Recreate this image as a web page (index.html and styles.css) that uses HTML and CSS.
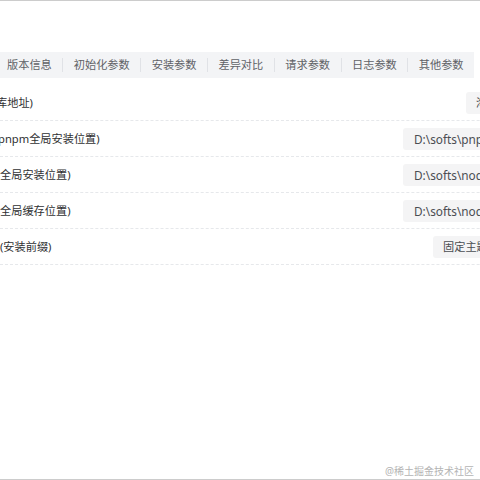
FILE: index.html
```html
<!DOCTYPE html>
<html lang="zh-CN">
<head>
<meta charset="utf-8">
<link rel="stylesheet" href="styles.css">
</head>
<body>
<div class="frame">
  <nav class="tabs">
    <span class="tab">版本信息</span><span class="sep"></span>
    <span class="tab">初始化参数</span><span class="sep"></span>
    <span class="tab">安装参数</span><span class="sep"></span>
    <span class="tab">差异对比</span><span class="sep"></span>
    <span class="tab">请求参数</span><span class="sep"></span>
    <span class="tab">日志参数</span><span class="sep"></span>
    <span class="tab">其他参数</span>
  </nav>
  <div class="rows">
    <div class="row first">
      <span class="label cut4">库地址)</span>
      <span class="val w1">淘宝镜像源</span>
    </div>
    <div class="row">
      <span class="label cut2">pnpm全局安装位置)</span>
      <span class="val w2">D:\softs\pnpm\global</span>
    </div>
    <div class="row">
      <span class="label">全局安装位置)</span>
      <span class="val w2">D:\softs\nodejs\node_global</span>
    </div>
    <div class="row">
      <span class="label">全局缓存位置)</span>
      <span class="val w2">D:\softs\nodejs\node_cache</span>
    </div>
    <div class="row">
      <span class="label">(安装前缀)</span>
      <span class="val w3">固定主题路径</span>
    </div>
  </div>
  <div class="mark">@稀土掘金技术社区</div>
</div>
</body>
</html>
```
FILE: styles.css
```css
html, body {
  margin: 0;
  padding: 0;
  background: #ffffff;
  overflow: hidden;
}
body {
  font-family: "Noto Sans", "Noto Sans CJK SC", sans-serif;
  font-size: 11.2px;
  color: #303133;
}
.frame {
  position: relative;
  width: 480px;
  height: 480px;
  box-sizing: border-box;
  border-top: 1px solid #cccccc;
  border-bottom: 1px solid #cccccc;
  overflow: hidden;
}
.tabs {
  display: inline-flex;
  align-items: center;
  height: 26px;
  margin: 51px 0 0 -3px;
  background: #f3f4f6;
  color: #606266;
}
.tab {
  padding: 0 10.5px;
  line-height: 26px;
  white-space: nowrap;
}
.tab:first-child {
  padding-left: 10px;
}
.sep {
  width: 1px;
  height: 14px;
  background: #e0e2e6;
}
.rows {
  width: 600px;
  margin-top: 7px;
}
.row {
  display: flex;
  align-items: center;
  height: 36px;
  border-bottom: 1px dashed #e6e8eb;
  box-sizing: border-box;
}
.label {
  flex: 1;
  white-space: nowrap;
  line-height: 16px;
}
.cut4 { margin-left: -4px; }
.cut2 { margin-left: -2px; }
.val {
  flex-shrink: 0;
  box-sizing: border-box;
  height: 22px;
  line-height: 22px;
  padding: 0 10px 0 11px;
  background: #f4f4f5;
  border-radius: 3px;
  color: #4a4d52;
  font-size: 11.8px;
  white-space: nowrap;
  overflow: hidden;
}
.w1 { width: 134px; }
.w2 { width: 197px; }
.w3 { width: 167px; }
.w3, .w1 { padding-left: 10px; font-size: 11.2px; }
.mark {
  position: absolute;
  right: 6px;
  bottom: 2px;
  font-size: 10px;
  color: #b4b4b4;
  line-height: 12px;
}
```
